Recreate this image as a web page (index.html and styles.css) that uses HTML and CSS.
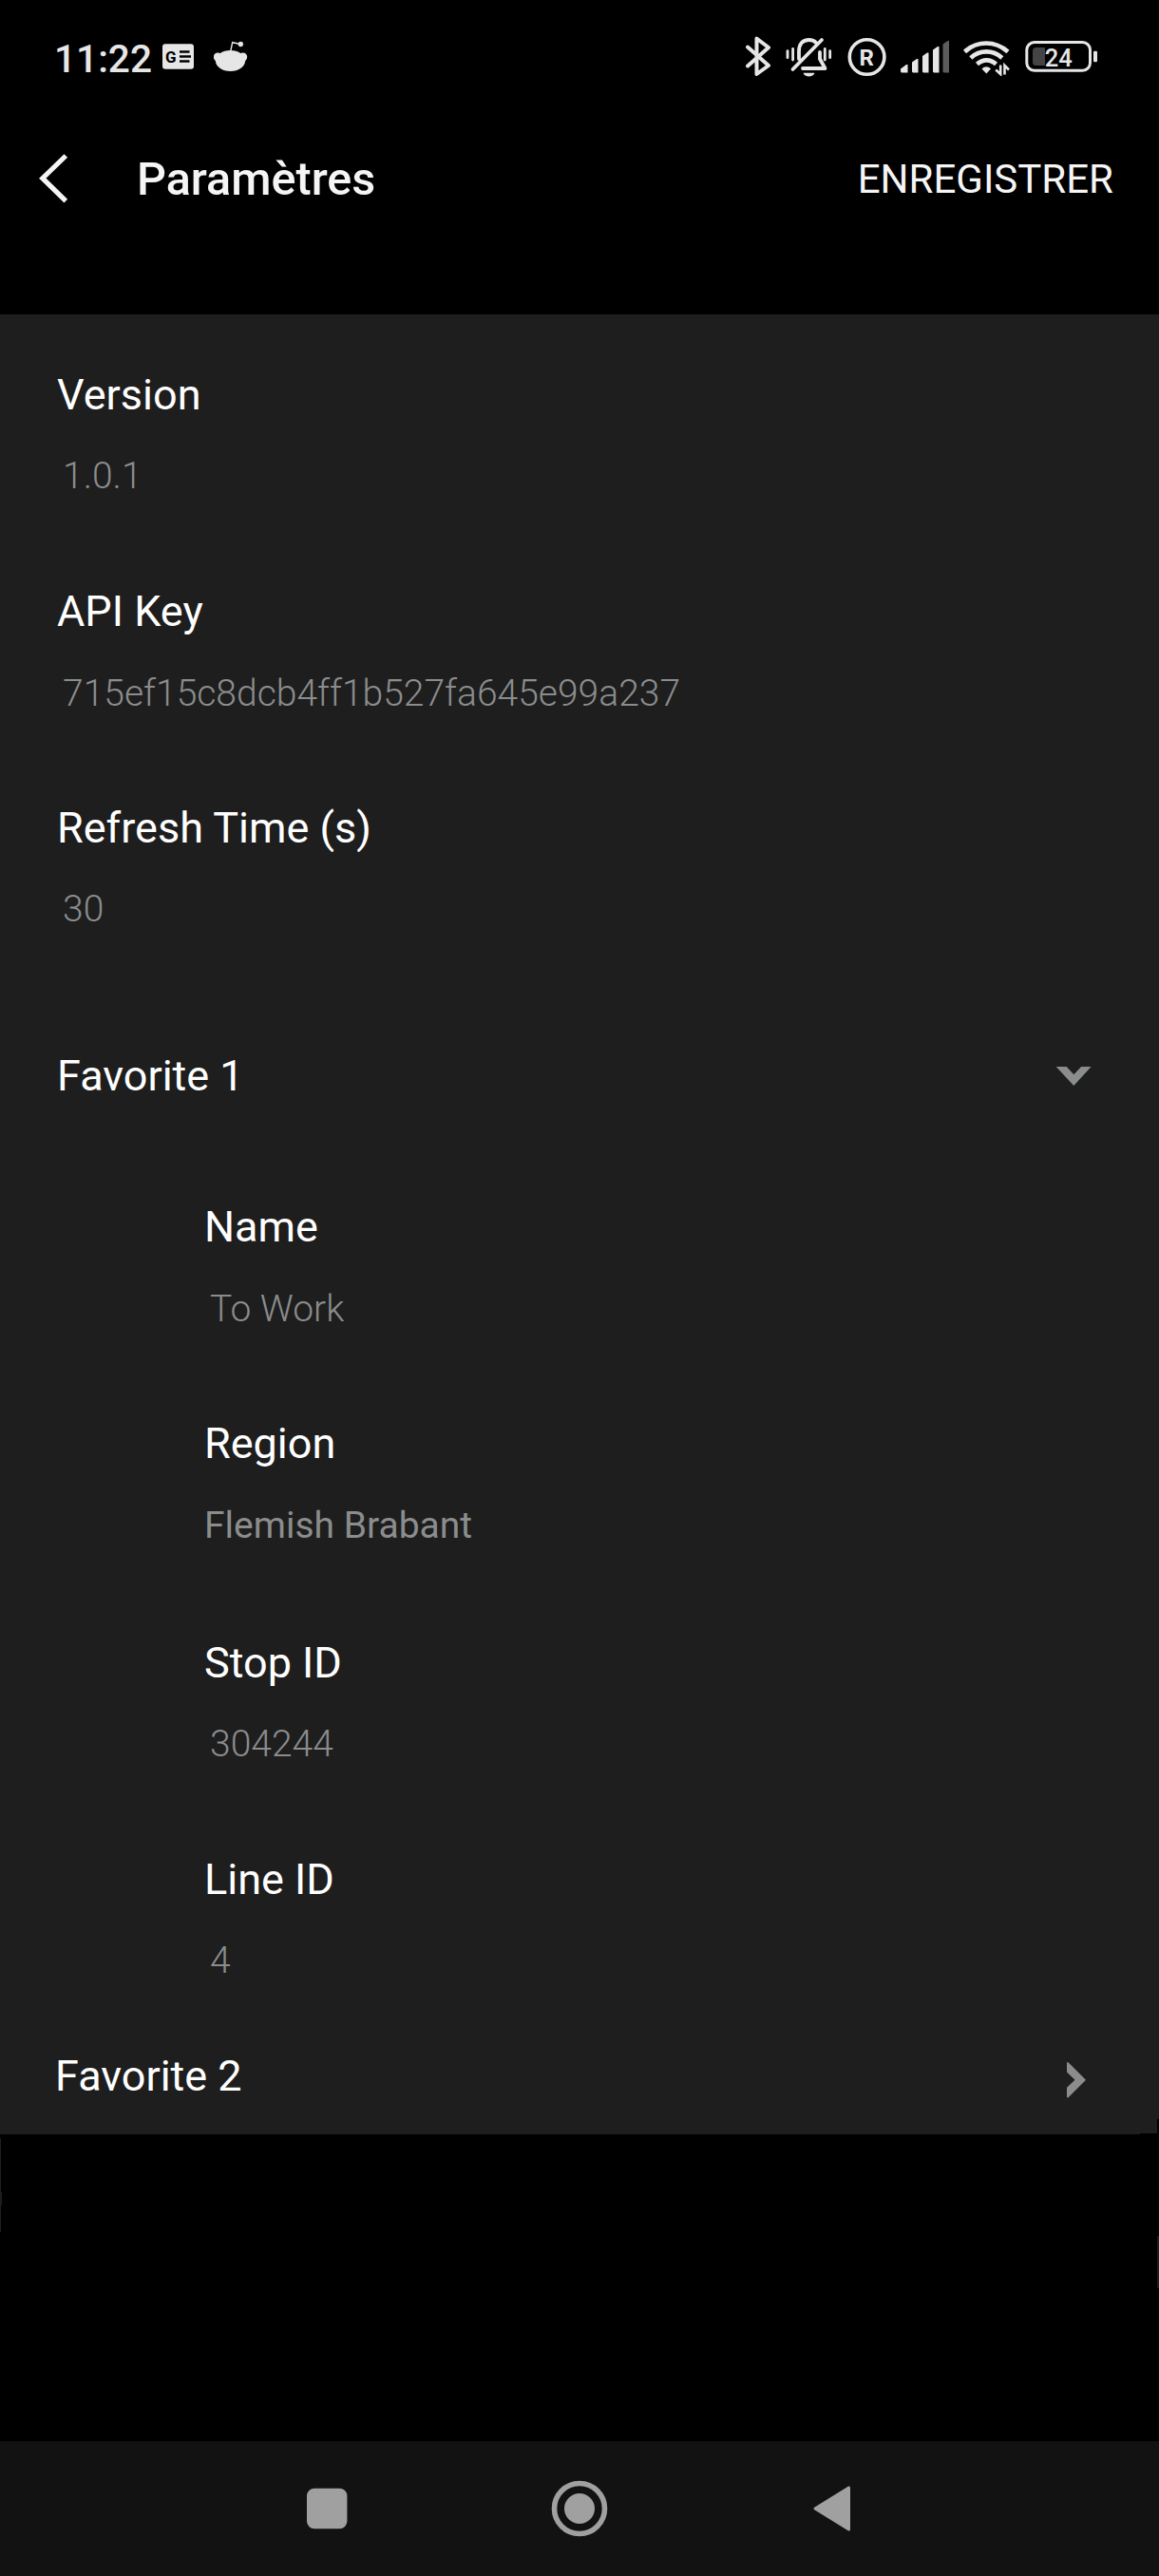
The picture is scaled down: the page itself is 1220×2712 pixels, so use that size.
FILE: index.html
```html
<!DOCTYPE html>
<html lang="fr">
<head>
<meta charset="utf-8">
<title>Paramètres</title>
<link rel="stylesheet" href="styles.css">
</head>
<body>
<div class="screen">
  <div class="status">
    <div class="status-left">
      <span class="clock">11:22</span>
      <svg class="news" width="33" height="27" viewBox="171 46 33 27"><rect x="171" y="46.3" width="33" height="26.4" rx="3" fill="#e6e6e6"/><text x="174" y="65.7" class="news-g">G</text><path d="M189 54.5h10.5M189 59.5h12M189 64.5h10.5" stroke="#000" stroke-width="2.4"/></svg>
      <svg class="alien" width="36" height="34" viewBox="225 42 36 34" fill="#e6e6e6"><ellipse cx="242.5" cy="64" rx="15.6" ry="11"/><circle cx="229.3" cy="60" r="4.5"/><circle cx="255.7" cy="60" r="4.5"/><path d="M242.7 54l2-9.3 7.3 1.6" fill="none" stroke="#e6e6e6" stroke-width="1.4"/><circle cx="253.4" cy="46.5" r="2.7"/></svg>
    </div>
    <div class="status-right">
      <svg width="27" height="44" viewBox="785 37 27 44" fill="none" stroke="#e6e6e6" stroke-width="4" stroke-linecap="round" stroke-linejoin="round"><path d="M787 49.500l22 19.500-12.500 9V40.500l12.500 9.500-22 19.500"/></svg>
      <svg class="bell" width="50" height="44" viewBox="827 38 50 44" fill="none" stroke="#e6e6e6" stroke-width="3.800" stroke-linecap="round" stroke-linejoin="round"><path d="M834.500 73L865 42M841 62v-8c0-8 4-12 10.500-12 3.500 0 6 1.200 7.500 3M863 55v7l5.500 10H845"/><path d="M829 53.700v7M834.600 51.500v11.500M868.300 51.500v11.500M873.700 53.700v7" stroke-width="2.800"/><path d="M845.500 76.800h12c-1.500 5-10.500 5-12 0z" fill="#e6e6e6" stroke="none"/></svg>
      <svg class="reg" width="42" height="42" viewBox="892 39 42 42"><circle cx="912.600" cy="60" r="18.300" fill="none" stroke="#e6e6e6" stroke-width="3.600"/><text x="904.500" y="69" class="reg-r">R</text></svg>
      <svg class="signal" width="53" height="36" viewBox="947 42 53 36" fill="#e6e6e6"><path d="M948 75.500v-3l6-4.500h1.500v8.500H949zM960 75.500V65.500l5-3.500h1.500v14.500H961zM971 75.500V59l5-3.500h1.500v21H972zM982 75.500V52.500l5-3.500h1.500v27.500H983z"/><path d="M992.500 75.500v-29l5-3.500h1.500v33.500h-5.500z" fill="#5c5c5c"/></svg>
      <svg class="wifi" width="51" height="40" viewBox="1013 40 51 40" fill="none" stroke="#e6e6e6" stroke-width="4.600"><path d="M1015.500 54.500c13-12 32-12 45.500 0M1021.800 61c9.500-8.800 23.500-8.800 33 0M1028.500 67.500c6-5.500 14-5.500 20 0"/><path d="M1033.500 72.500c3-3 6.500-3 9.500 0l-4.700 5z" fill="#e6e6e6" stroke="none"/><path d="M1053.200 68.500v9.500l-5-4.500M1057.500 78.500v-9.500l4.500 4.500" stroke-width="2.600"/></svg>
      <svg class="battery" width="77" height="36" viewBox="1079 41 77 36"><rect x="1080.800" y="44.500" width="66.700" height="29.700" rx="8" fill="none" stroke="#e6e6e6" stroke-width="3"/><path d="M1087 53.500q0-3.500 3.500-3.500h9.500v19h-9.500q-3.500 0-3.500-3.500z" fill="#444"/><rect x="1151" y="53.700" width="4" height="11.500" rx="1.200" fill="#e6e6e6"/><text x="1099.800" y="70" class="level">24</text></svg>
    </div>
  </div>
  <header class="appbar">
    <svg class="back" width="32" height="54" viewBox="40 161 32 54" fill="none" stroke="#f5f5f5" stroke-width="5.200"><path d="M69.300 164l-24.500 23.700 24.500 24"/></svg>
    <h1 class="title">Paramètres</h1>
    <span class="save">ENREGISTRER</span>
  </header>
  <main class="panel">
    <div class="field"><div class="label">Version</div><div class="value">1.0.1</div></div>
    <div class="field loose"><div class="label">API Key</div><div class="value">715ef15c8dcb4ff1b527fa645e99a237</div></div>
    <div class="field"><div class="label">Refresh Time (s)</div><div class="value">30</div></div>
    <div class="group open"><span class="label">Favorite 1</span><svg width="38" height="22" viewBox="1112 1122 38 22"><path d="M1112.700 1123h11l7.600 8.300 7.800-8.300h10.500l-18.300 20z" fill="#8b8d8d"/></svg></div>
    <div class="children">
      <div class="field loose"><div class="label">Name</div><div class="value">To Work</div></div>
      <div class="field loose region"><div class="label">Region</div><div class="value choice">Flemish Brabant</div></div>
      <div class="field"><div class="label">Stop ID</div><div class="value">304244</div></div>
      <div class="field"><div class="label">Line ID</div><div class="value">4</div></div>
    </div>
    <div class="group closed"><span class="label">Favorite 2</span><svg width="22" height="38" viewBox="1123 2171 22 38"><path d="M1124 2171.300h1.500l18.500 18.400-18.500 18.600H1124v-10.500l8.500-8.100-8.500-8.100z" fill="#8b8d8d"/></svg></div>
  </main>
  <div class="rest"></div>
  <nav class="navbar">
    <svg width="44" height="44" viewBox="0 0 44 44"><rect x="1" y="0.700" width="42.400" height="42.600" rx="8" fill="#a0a0a0"/></svg>
    <svg class="home" width="60" height="60" viewBox="0 0 60 60"><circle cx="30" cy="30" r="26.500" fill="none" stroke="#a0a0a0" stroke-width="5.600"/><circle cx="30" cy="30" r="16" fill="#a0a0a0"/></svg>
    <svg class="prev" width="42" height="50" viewBox="0 0 42 50"><path d="M3 25L38.500 3v44z" fill="#a0a0a0" stroke="#a0a0a0" stroke-width="3" stroke-linejoin="round"/></svg>
  </nav>
</div>
</body>
</html>
```
FILE: styles.css
```css
* { box-sizing: border-box; }
body { margin: 0; background: #000; font-family: Roboto, sans-serif; }
svg { display: block; flex: none; }
.screen { width: 1220px; height: 2712px; display: flex; flex-direction: column; background: #000; }

.status { height: 120px; display: flex; justify-content: space-between; align-items: flex-start; padding: 37px 64px 0 57px; }
.status-left, .status-right { display: flex; align-items: flex-start; }
.clock { width: 114px; font-size: 40.6px; font-weight: 500; line-height: 51px; color: #e6e6e6; white-space: nowrap; }
.news { margin-top: 9px; }
.alien { margin: 5px 0 0 21px; }
.news-g { font: 700 17px Roboto, sans-serif; fill: #000; }
.reg-r { font: 700 24px Roboto, sans-serif; fill: #e6e6e6; }
.level { font: 500 25.5px Roboto, sans-serif; fill: #e6e6e6; }
.bell { margin: 1px 0 0 15px; }
.reg { margin: 2px 0 0 15px; }
.signal { margin: 5px 0 0 13px; }
.wifi { margin: 3px 0 0 13px; }
.battery { margin: 4px 0 0 15px; }

.appbar { height: 211px; display: flex; align-items: flex-start; padding: 41px 48px 0 40px; color: #f5f5f5; }
.title { margin: -2px 0 0 72px; font-size: 48.5px; font-weight: 500; line-height: 60px; }
.save { margin: 0 0 0 auto; font-size: 42px; line-height: 56px; }

.panel {
  height: 1916px;
  padding: 58px 71px 0 60px;
  background:
    linear-gradient(#000, #000) 100% 100% / 2px 16px no-repeat,
    linear-gradient(#000, #000) 100% 100% / 20px 1px no-repeat,
    #1e1e1e;
}
.field { height: 228px; display: flex; flex-direction: column; gap: 34px; }
.loose { gap: 35px; }
.region { height: 231px; }
.label { font-size: 45px; line-height: 54px; color: #fff; }
.value { padding-left: 6px; font-size: 39px; font-weight: 300; line-height: 49px; color: #8b8d8d; }
.choice { padding-left: 0; font-weight: 400; }
.group { display: flex; justify-content: space-between; align-items: center; }
.open { height: 54px; margin-top: 33px; }
.children { margin-top: 105px; padding-left: 155px; }
.children .field:last-child { height: 207px; }
.closed { height: 54px; padding-right: 5px; margin-left: -2px; }
.closed svg { margin-top: 7px; }

.rest {
  height: 323px;
  background:
    linear-gradient(#1e1e1e, #1e1e1e) 0 4px / 1px 99px no-repeat,
    linear-gradient(#1e1e1e, #1e1e1e) 0 61px / 2px 14px no-repeat,
    linear-gradient(#1e1e1e, #1e1e1e) 1218px 107px / 2px 55px no-repeat;
}
.navbar { height: 142px; display: flex; align-items: center; padding-left: 322px; background: #121212; }
.home { margin-left: 214px; }
.prev { margin-left: 215px; }
```
